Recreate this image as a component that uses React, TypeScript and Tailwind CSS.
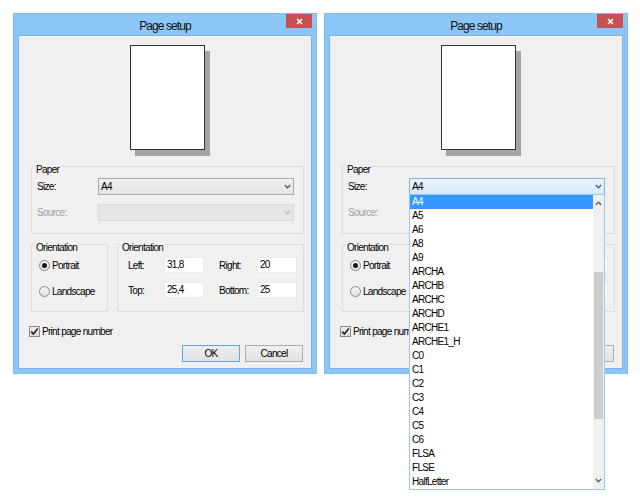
import React from "react";

const items = [
  "A4", "A5", "A6", "A8", "A9", "ARCHA", "ARCHB", "ARCHC", "ARCHD", "ARCHE1", "ARCHE1_H",
  "C0", "C1", "C2", "C3", "C4", "C5", "C6", "FLSA", "FLSE", "HalfLetter",
];

function Chev({ up, color = "#555" }: { up?: boolean; color?: string }) {
  return (
    <svg width="7" height="5" viewBox="0 0 7 5">
      <path
        d={up ? "M0.8 4 L3.5 1.2 L6.2 4" : "M0.8 1 L3.5 3.8 L6.2 1"}
        stroke={color}
        strokeWidth="1.3"
        fill="none"
      />
    </svg>
  );
}

function Group({ title, className, children }: { title: string; className: string; children?: React.ReactNode }) {
  return (
    <div className={`relative border border-[#dcdcdc] ${className}`}>
      <span className="absolute left-[3px] top-[-3px] px-[1px] bg-[#f0f0f0] leading-[11px] text-black">{title}</span>
      {children}
    </div>
  );
}

function Combo({ value, disabled, active, open }: { value?: string; disabled?: boolean; active?: boolean; open?: boolean }) {
  const cls = disabled
    ? "border-[#d9d9d9] bg-[#e6e6e6]"
    : active
    ? "border-[#7eb4ea] bg-linear-to-b from-[#ecf4fc] to-[#d6e8fa]"
    : "border-[#acacac] bg-linear-to-b from-[#f0f0f0] to-[#e5e5e5]";
  return (
    <div className={`relative flex-1 h-[17px] border ${cls} flex items-center`}>
      <span className="pl-[2px] flex-1 leading-[15px]">{value}</span>
      <span className="w-[12px] flex items-center justify-center">
        <Chev color={disabled ? "#bbb" : "#555"} />
      </span>
      {open && (
        <div className="absolute left-[-1px] right-[-1px] top-[15px] h-[296px] z-10 bg-white border border-[#9cc6ee] flex">
          <div className="flex-1 flex flex-col">
            {items.map((it, i) => (
              <div
                key={it}
                className={
                  i === 0
                    ? "h-[14px] leading-[14px] pl-[2px] bg-[#3399ff] text-white"
                    : "h-[14px] leading-[14px] pl-[2px] text-black"
                }
              >
                {it}
              </div>
            ))}
          </div>
          <div className="w-[11px] bg-[#f0f0f0] flex flex-col">
            <div className="h-[17px] flex items-center justify-center">
              <Chev up color="#606060" />
            </div>
            <div className="h-[60px]" />
            <div className="h-[147px] mx-[1px] bg-[#cdcdcd]" />
            <div className="flex-1" />
            <div className="h-[17px] flex items-center justify-center">
              <Chev color="#606060" />
            </div>
          </div>
        </div>
      )}
    </div>
  );
}

function Radio({ checked, label }: { checked?: boolean; label: string }) {
  return (
    <div className="h-[16px] flex items-center">
      <span className="w-[11px] h-[11px] rounded-full border border-[#8a8a8a] bg-linear-to-b from-[#f4f4f4] to-[#e2e2e2] flex items-center justify-center">
        {checked && <span className="w-[5px] h-[5px] rounded-full bg-[#1a1a1a]" />}
      </span>
      <span className="ml-[2px]">{label}</span>
    </div>
  );
}

function Field({ label, value, wide }: { label: string; value: string; wide?: boolean }) {
  return (
    <>
      <span className={wide ? "w-[38px]" : "w-[36px]"}>{label}</span>
      <span className="w-[40px] h-[16px] bg-white border border-[#ececec] pl-[2px] leading-[14px]">{value}</span>
    </>
  );
}

function Window({ open }: { open?: boolean }) {
  return (
    <div className="w-[304px] h-[361px] bg-[#8cc6f7] border border-[#82bdf1] flex flex-col shrink-0">
      <div className="relative h-[21px] flex items-center justify-center">
        <span className="text-[12px] tracking-[-0.9px] text-[#111] mt-[3px]">Page setup</span>
        <div className="absolute right-[4px] top-0 w-[26px] h-[14px] bg-[#c75050] flex items-center justify-center">
          <svg width="7" height="7" viewBox="0 0 7 7">
            <path d="M1 1 L6 6 M6 1 L1 6" stroke="#fff" strokeWidth="1.5" />
          </svg>
        </div>
      </div>
      <div className="mx-[4px] mb-[4px] flex-1 border border-[#7ab3e6] bg-[#f0f0f0] flex flex-col">
        <div className="ml-[111px] mt-[9px] w-[75px] h-[105px] bg-white border border-[#333] shadow-[5px_6px_0_#a3a3a3]" />

        <Group title="Paper" className="ml-[12px] mt-[16px] w-[273px] h-[68px]">
          <div className="pt-[11px] pl-[5px] pr-[9px] flex flex-col">
            <div className="flex items-center h-[17px]">
              <span className="w-[61px]">Size:</span>
              <Combo value="A4" active={open} open={open} />
            </div>
            <div className="flex items-center h-[17px] mt-[9px]">
              <span className="w-[61px] text-[#a0a0a0]">Source:</span>
              <Combo disabled />
            </div>
          </div>
        </Group>

        <div className="ml-[12px] mt-[10px] flex gap-[9px]">
          <Group title="Orientation" className="w-[77px] h-[68px]">
            <div className="pt-[12px] pl-[7px] flex flex-col gap-[10px]">
              <Radio checked label="Portrait" />
              <Radio label="Landscape" />
            </div>
          </Group>
          <Group title="Orientation" className="w-[187px] h-[68px]">
            <div className="pt-[12px] pl-[10px] flex flex-col gap-[9px]">
              <div className="flex items-center">
                <Field label="Left:" value="31,8" />
                <span className="w-[15px]" />
                <Field label="Right:" value="20" wide />
              </div>
              <div className="flex items-center">
                <Field label="Top:" value="25,4" />
                <span className="w-[15px]" />
                <Field label="Bottom:" value="25" wide />
              </div>
            </div>
          </Group>
        </div>

        <div className="ml-[10px] mt-[13px] flex items-center h-[12px]">
          <span className="w-[11px] h-[11px] border border-[#8a8a8a] bg-linear-to-b from-[#eeeeee] to-[#dcdcdc] flex items-center justify-center">
            <svg width="9" height="9" viewBox="0 0 9 9">
              <path d="M1.2 4.6 L3.4 7 L7.8 1.5" stroke="#222" strokeWidth="1.6" fill="none" />
            </svg>
          </span>
          <span className="ml-[2px]">Print page number</span>
        </div>

        <div className="mt-[8px] pr-[8px] flex justify-end gap-[5px]">
          <div className="w-[58px] h-[17px] border border-[#5fa6ec] bg-linear-to-b from-[#ededed] to-[#e2e2e2] flex items-center justify-center">
            OK
          </div>
          <div className="w-[58px] h-[17px] border border-[#acacac] bg-linear-to-b from-[#f0f0f0] to-[#e2e2e2] flex items-center justify-center">
            Cancel
          </div>
        </div>
      </div>
    </div>
  );
}

export default function App() {
  return (
    <div className="w-[640px] h-[501px] bg-white pt-[13px] pl-[13px] flex gap-[7px] items-start font-['Liberation_Sans',Arial,sans-serif] text-[10px] tracking-[-0.7px] text-black">
      <Window />
      <Window open />
    </div>
  );
}
